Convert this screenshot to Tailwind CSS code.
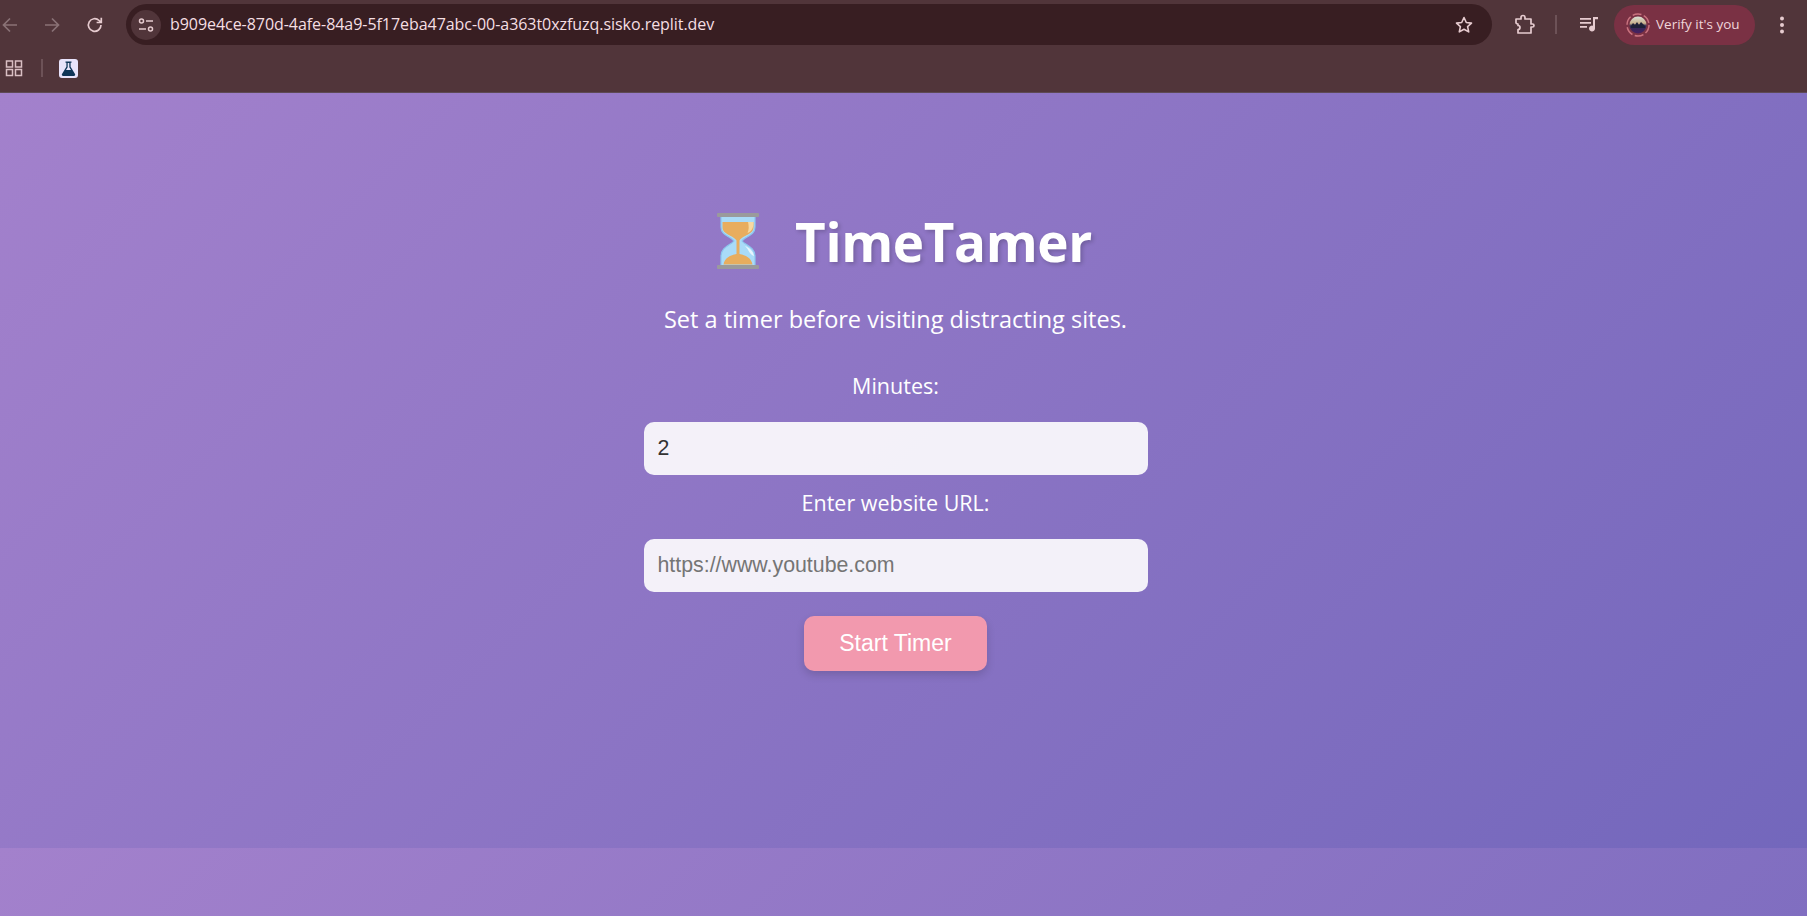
<!DOCTYPE html>
<html lang="en">
<head>
    <meta charset="UTF-8">
    <meta name="viewport" content="width=device-width, initial-scale=1.0">
    <title>TimeTamer</title>
    <script src="https://cdn.jsdelivr.net/npm/@tailwindcss/browser@4"></script>
</head>
<body class="h-[916px] w-full overflow-hidden flex flex-col font-['Open_Sans',sans-serif]">
    <!-- browser toolbar -->
    <header class="h-[93px] shrink-0 bg-[#51353a] border-b border-[#5e4a55] flex flex-col">
        <div class="h-[49px] flex items-center">
            <div class="w-[126px] shrink-0 flex items-center">
                <svg class="w-[20px] h-[20px] text-[#8a7276]" viewBox="0 0 20 20" fill="none" stroke="currentColor" stroke-width="1.7"><path d="M17 10H4M10 3.5 3.5 10l6.500 6.500"/></svg>
                <svg class="w-[20px] h-[20px] ml-[22px] text-[#8a7276]" viewBox="0 0 20 20" fill="none" stroke="currentColor" stroke-width="1.700"><path d="M3 10h13M10 3.500 16.500 10 10 16.500"/></svg>
                <svg class="w-[20px] h-[20px] ml-[23px] text-[#e6cbcf]" viewBox="0 0 20 20" fill="none" stroke="currentColor" stroke-width="1.700"><path d="M16 10a6.300 6.300 0 1 1-1.900-4.500L16 7.300M16.300 2.800v4.700h-4.700"/></svg>
            </div>
            <div class="w-[1366px] h-[41px] shrink-0 bg-[#381e22] rounded-full flex items-center pl-[5px] pr-[18px]">
                <div class="w-[30px] h-[30px] rounded-full bg-[#51353a] flex items-center justify-center">
                    <svg class="w-[18px] h-[18px] text-[#e6cbcf]" viewBox="0 0 18 18" fill="none" stroke="currentColor" stroke-width="1.500"><circle cx="4.500" cy="5" r="2"/><path d="M9 5h7M2 13h7"/><circle cx="13.500" cy="13" r="2"/></svg>
                </div>
                <span class="ml-[9px] -mt-[2px] text-[16px] text-[#f5dfe2] tracking-[-0.05px]">b909e4ce-870d-4afe-84a9-5f17eba47abc-00-a363t0xzfuzq.sisko.replit.dev</span>
                <svg class="ml-auto w-[20px] h-[20px] text-[#e6cbcf]" viewBox="0 0 20 20" fill="none" stroke="currentColor" stroke-width="1.600" stroke-linejoin="round"><path d="M10 2.500l2.300 5 5.200.6-3.900 3.500 1.100 5.300L10 14.200l-4.700 2.700 1.100-5.300L2.500 8.100l5.200-.6z"/></svg>
            </div>
            <svg class="ml-[21px] w-[22px] h-[22px] text-[#e6cbcf]" viewBox="0 0 22 22" fill="none" stroke="currentColor" stroke-width="1.700" stroke-linejoin="round"><path d="M3 5h5V3.500a2 2 0 0 1 4 0V5h6v5h1.500a1.500 1.500 0 0 1 0 3H18v6H5v-3.500a2 2 0 0 0 0-4V10a3 3 0 0 1-2-1z"/></svg>
            <div class="ml-[20px] w-[2px] h-[19px] bg-[#6d5257]"></div>
            <svg class="ml-[21px] w-[22px] h-[22px] text-[#e6cbcf]" viewBox="0 0 22 22" fill="currentColor"><path d="M2 4h11v1.700H2zM2 8h11v1.700H2zM2 12h7v1.700H2zM15 3h5v2.300h-3v9.200a3 3 0 1 1-2-2.800z"/></svg>
            <div class="ml-[14px] w-[141px] h-[40px] rounded-full bg-[#7a3144] flex items-center pl-[12px]">
                <svg class="w-[24px] h-[24px] shrink-0" viewBox="0 0 24 24">
                    <defs><linearGradient id="sky" x1="0" y1="0" x2="0" y2="1"><stop offset="0" stop-color="#d9e2d8"/><stop offset="0.4" stop-color="#c8b08c"/><stop offset="0.55" stop-color="#2e2a52"/><stop offset="1" stop-color="#4a1f63"/></linearGradient></defs>
                    <circle cx="12" cy="12" r="11" fill="none" stroke="#c9727f" stroke-width="1.500" stroke-dasharray="9 2.500"/>
                    <circle cx="12" cy="12" r="8.500" fill="url(#sky)"/>
                    <path d="M5 13l2-3 2 2 2-3 2 3 2-3 2 2 2 2v2H5z" fill="#1d2038"/>
                </svg>
                <span class="ml-[6px] -mt-[1px] text-[13.500px] text-[#f0d5da] whitespace-nowrap">Verify it's you</span>
            </div>
            <svg class="ml-[24px] w-[6px] h-[20px] text-[#e6cbcf]" viewBox="0 0 6 20" fill="currentColor"><circle cx="3" cy="3.500" r="2"/><circle cx="3" cy="10" r="2"/><circle cx="3" cy="16.500" r="2"/></svg>
        </div>
        <div class="flex-1 flex items-center pl-[5px] pb-[5px]">
            <svg class="w-[18px] h-[18px] text-[#d9bfc3]" viewBox="0 0 18 18" fill="none" stroke="currentColor" stroke-width="1.500"><rect x="1.500" y="2" width="6" height="6"/><rect x="10.500" y="2" width="6" height="6"/><rect x="1.500" y="10.500" width="6" height="6"/><rect x="10.500" y="10.500" width="6" height="6"/></svg>
            <div class="ml-[18px] w-[2px] h-[18px] bg-[#6d5257]"></div>
            <svg class="ml-[16px] w-[19px] h-[19px]" viewBox="0 0 19 19">
                <rect width="19" height="19" rx="3" fill="#e8e3fb"/>
                <path d="M6.500 2.500h6v1.300h-.9v4L16 15a1.300 1.300 0 0 1-1.100 2H4.100a1.300 1.300 0 0 1-1.100-2l4.400-7.200v-4h-.9z" fill="#0f3558"/>
                <path d="M8.700 4h1.600v4.200l1.700 2.800H7l1.700-2.800z" fill="#e8e3fb"/>
            </svg>
        </div>
    </header>

    <!-- page, gradient tile repeats below 755px -->
    <main class="flex-1 bg-[linear-gradient(135deg,#a381cc,#7367bc)] bg-[length:100%_755px] bg-repeat flex flex-col items-center pr-[16px] text-white">
        <div class="flex items-center justify-center h-[70px] mt-[113px] ml-[16px]">
            <svg class="w-[46px] h-[58px]" viewBox="0 0 46 58">
                <path d="M6 4h34v11c0 9-10 9-13 14 3 4 13 6 13 15v10H6V44c0-9 10-11 13-15-3-5-13-5-13-14z" fill="#a9dbf8" stroke="#8cc6ee" stroke-width="1.200"/>
                <path d="M7.500 10h31v5c0 8-11 8-14 13.500V42c6 1 12 4 13 10.500H8.500c1-6.500 7-9.500 13-10.500V28.500C18.500 23 7.500 23 7.500 15z" fill="#e8ad5e"/>
                <path d="M33 10h5.500c0 5-1 9-6 11 1.500-3 1.500-7 .5-11z" fill="#f7d9a1"/>
                <path d="M30 34c5 2 8 5 9 10-4-1-5-6-9-10z" fill="#e6f5fd"/>
                <rect x="2" y="1" width="42" height="4" rx="1" fill="#9a9a9c"/>
                <rect x="2" y="53" width="42" height="4" rx="1" fill="#9a9a9c"/>
            </svg>
            <h1 class="ml-[34px] text-[53px] leading-none font-bold tracking-[-0.4px] [text-shadow:2px_2px_4px_rgba(0,0,0,0.2)]">TimeTamer</h1>
        </div>
        <p class="mt-[25px] h-[36px] leading-[36px] text-[23.500px]">Set a timer before visiting distracting sites.</p>
        <label class="mt-[32px] h-[34px] leading-[34px] text-[21.500px]">Minutes:</label>
        <input type="number" value="2" class="mt-[19px] w-[504px] h-[53px] rounded-[10px] bg-white/90 px-[14px] text-[21.330px] text-[#333] font-['Liberation_Sans',sans-serif] outline-none [appearance:textfield]">
        <label class="mt-[11px] h-[34px] leading-[34px] text-[21.500px]">Enter website URL:</label>
        <input type="text" placeholder="https://www.youtube.com" class="mt-[19px] w-[504px] h-[53px] rounded-[10px] bg-white/90 px-[14px] text-[21.330px] text-[#333] placeholder:text-[#757575] font-['Liberation_Sans',sans-serif] outline-none">
        <button class="mt-[24px] w-[183px] h-[55px] rounded-[10px] bg-[#f299ae] text-[23px] text-white font-['Liberation_Sans',sans-serif] shadow-[0_4px_8px_rgba(0,0,0,0.15)]">Start Timer</button>
    </main>
</body>
</html>
